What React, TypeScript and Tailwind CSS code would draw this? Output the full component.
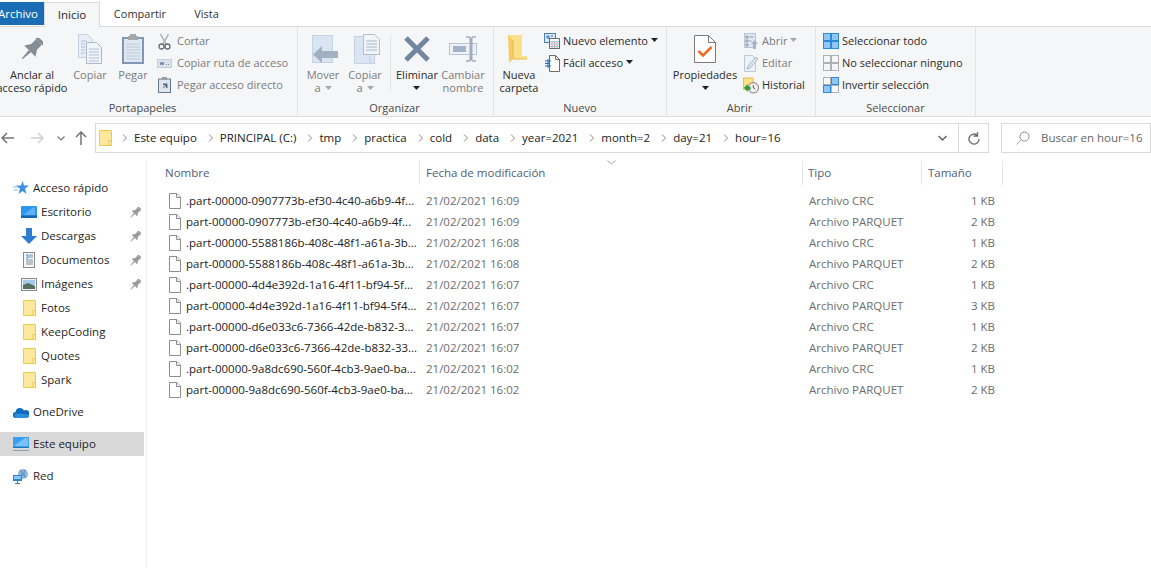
import type { ReactNode } from "react";

const FILES = [
  [".part-00000-0907773b-ef30-4c40-a6b9-4f...", "21/02/2021 16:09", "Archivo CRC", "1 KB"],
  ["part-00000-0907773b-ef30-4c40-a6b9-4f...", "21/02/2021 16:09", "Archivo PARQUET", "2 KB"],
  [".part-00000-5588186b-408c-48f1-a61a-3b...", "21/02/2021 16:08", "Archivo CRC", "1 KB"],
  ["part-00000-5588186b-408c-48f1-a61a-3b...", "21/02/2021 16:08", "Archivo PARQUET", "2 KB"],
  [".part-00000-4d4e392d-1a16-4f11-bf94-5f...", "21/02/2021 16:07", "Archivo CRC", "1 KB"],
  ["part-00000-4d4e392d-1a16-4f11-bf94-5f4...", "21/02/2021 16:07", "Archivo PARQUET", "3 KB"],
  [".part-00000-d6e033c6-7366-42de-b832-3...", "21/02/2021 16:07", "Archivo CRC", "1 KB"],
  ["part-00000-d6e033c6-7366-42de-b832-33...", "21/02/2021 16:07", "Archivo PARQUET", "2 KB"],
  [".part-00000-9a8dc690-560f-4cb3-9ae0-ba...", "21/02/2021 16:02", "Archivo CRC", "1 KB"],
  ["part-00000-9a8dc690-560f-4cb3-9ae0-ba...", "21/02/2021 16:02", "Archivo PARQUET", "2 KB"],
];

const CRUMBS = ["Este equipo", "PRINCIPAL (C:)", "tmp", "practica", "cold", "data", "year=2021", "month=2", "day=21", "hour=16"];

function Caret({ dim }: { dim?: boolean }) {
  return (
    <svg width="7" height="4" viewBox="0 0 7 4" className="inline-block">
      <path d="M0 0h7L3.500 4z" fill={dim ? "#a8a8a8" : "#222"} />
    </svg>
  );
}

function LargeButton({
  icon,
  lines,
  width,
  dim,
  caret,
}: {
  icon: ReactNode;
  lines: ReactNode[];
  width: string;
  dim?: boolean;
  caret?: boolean;
}) {
  return (
    <div className={`flex flex-col items-center ${width} ${dim ? "text-[#7c7c7c]" : "text-[#2b2b2b]"}`}>
      <div className="flex h-[41px] items-center justify-center pt-[3px]">{icon}</div>
      <div className="flex flex-col items-center whitespace-nowrap leading-[13px]">
        {lines.map((line, i) => (
          <span key={i} className="flex h-[13px] items-center gap-1">
            {line}
          </span>
        ))}
        {caret ? (
          <span className="flex h-[13px] items-center">
            <Caret />
          </span>
        ) : null}
      </div>
    </div>
  );
}

function SmallButton({
  icon,
  label,
  gap,
  dim,
  caret,
}: {
  icon: ReactNode;
  label: string;
  gap: string;
  dim?: boolean;
  caret?: boolean;
}) {
  return (
    <div className={`flex h-[22px] items-center whitespace-nowrap ${dim ? "text-[#7c7c7c]" : "text-[#2b2b2b]"}`}>
      <div className={`flex justify-center ${gap}`}>{icon}</div>
      <span>{label}</span>
      {caret ? (
        <span className="ml-[3px] flex items-center pb-[2px]">
          <Caret dim={dim} />
        </span>
      ) : null}
    </div>
  );
}

function Group({
  label,
  width,
  labelClass,
  children,
}: {
  label: string;
  width: string;
  labelClass?: string;
  children: ReactNode;
}) {
  return (
    <div className={`flex h-[90px] shrink-0 flex-col border-r border-[#e1e3e6] ${width}`}>
      <div className="flex h-[72px] flex-1 items-start">{children}</div>
      <div className={`pb-[2px] text-center leading-[14px] text-[#4a4a4a] ${labelClass ?? ""}`}>{label}</div>
    </div>
  );
}

function Column({ children, className }: { children: ReactNode; className: string }) {
  return <div className={`flex flex-col pt-[3px] ${className}`}>{children}</div>;
}

const PinIcon = ({ size = 22, color = "#858d95" }: { size?: number; color?: string }) => (
  <svg width={size} height={size} viewBox="0 0 22 22">
    <g transform="rotate(45 11 11)" fill={color}>
      <rect x="5" y="-2" width="12" height="3" />
      <rect x="7" y="1" width="8" height="8" />
      <path d="M7 8h8l4 6H3z" />
      <path d="M9.500 14h3l-1 11h-1z" />
    </g>
  </svg>
);

const CopyIcon = () => (
  <svg width="24" height="30" viewBox="0 0 24 30">
    <path d="M.5.500h9l5 5v18H.5z" fill="#e8eef6" stroke="#c5d1df" />
    <path d="M8.500 8.500h10l5 5v16h-15z" fill="#f1f4f8" stroke="#a9b8ca" />
    <path d="M3 7h6M3 10h4M3 13h4M3 16h4M3 19h4M11 15h10M11 18h10M11 21h10M11 24h10M11 27h10" stroke="#b3c0d1" />
  </svg>
);

const PasteIcon = () => (
  <svg width="22" height="30" viewBox="0 0 22 30">
    <rect x="1" y="4" width="20" height="25" fill="#dfe7f1" stroke="#8096b2" strokeWidth="2" />
    <path d="M8 0h6v2h2v4H6V2h2z" fill="#a3a6aa" />
    <path d="M4 10h14M4 13h14M4 16h14M4 19h14M4 22h14M4 25h14" stroke="#bfcbdb" />
  </svg>
);

const ScissorsIcon = () => (
  <svg width="13" height="17" viewBox="0 0 13 17" fill="none">
    <path d="M2.500 1l5.500 10M10.500 1L5 11" stroke="#a8adb3" strokeWidth="1.500" />
    <circle cx="3.500" cy="13.500" r="2.500" stroke="#5f6b78" strokeWidth="1.300" />
    <circle cx="9.500" cy="13.500" r="2.500" stroke="#5f6b78" strokeWidth="1.300" />
  </svg>
);

const PathIcon = () => (
  <svg width="15" height="9" viewBox="0 0 15 9" fill="none">
    <rect x=".5" y=".5" width="14" height="8" fill="#dbe3ee" stroke="#c2cedd" />
    <path d="M3 3l1 3 1-3 1 3 1-3M9 5.500h1M11 5.500h1" stroke="#66758a" strokeWidth=".8" />
  </svg>
);

const PasteShortcutIcon = () => (
  <svg width="13" height="16" viewBox="0 0 13 16">
    <rect x=".5" y="2" width="12" height="13.500" fill="#dfe5ec" stroke="#64788f" />
    <rect x="4" y="0" width="5" height="3" fill="#9a9ea3" />
    <path d="M4 12l3-4H5V6.500h4.500V11H8V9z" fill="#586b82" />
  </svg>
);

const MoveIcon = () => (
  <svg width="26" height="28" viewBox="0 0 26 28" className="ml-1">
    <rect x=".5" y=".5" width="20" height="27" fill="#d9e5f3" stroke="#c3d2e4" />
    <path d="M10 11v17l-9-8.500z" fill="#a3b0c1" />
    <rect x="9" y="16" width="17" height="7" fill="#a3b0c1" />
  </svg>
);

const CopyToIcon = () => (
  <svg width="26" height="30" viewBox="0 0 26 30" className="ml-1">
    <rect x=".5" y="2.500" width="20" height="27" fill="#d9e5f3" stroke="#c3d2e4" />
    <path d="M16 3v26" stroke="#c3d2e4" />
    <path d="M9.500.500h11l5 5v15h-16z" fill="#f1f4f8" stroke="#b3bfce" />
    <path d="M12 7h11M12 10h11M12 13h11M12 16h11" stroke="#a9b6c6" />
  </svg>
);

const DeleteIcon = () => (
  <svg width="26" height="26" viewBox="0 0 26 26">
    <path d="M2 2l22 22M24 2L2 24" stroke="#7386a0" strokeWidth="5" />
  </svg>
);

const RenameIcon = () => (
  <svg width="28" height="26" viewBox="0 0 28 26" fill="none">
    <rect x=".5" y="7.500" width="27" height="11" fill="#eef2f7" stroke="#b7c4d5" />
    <rect x="4" y="10" width="13" height="6" fill="#a2b3c9" />
    <path d="M17 1h3l2 1.500L24 1h3M17 25h3l2-1.500 2 1.500h3" stroke="#a0adbd" strokeWidth="1.500" />
    <path d="M22 2v22" stroke="#a0adbd" strokeWidth="3" />
  </svg>
);

const NewFolderIcon = () => (
  <svg width="19" height="28" viewBox="0 0 19 28" className="mr-[3px]">
    <path d="M0 0h14v21h5v3H5z" fill="#fbe08a" />
    <path d="M0 0l5 5v19l-4 4z" fill="#f5cd62" />
    <path d="M5 5v19h14" fill="none" stroke="#e4b850" />
  </svg>
);

const NewItemIcon = () => (
  <svg width="16" height="16" viewBox="0 0 16 16" fill="none">
    <rect x=".5" y=".5" width="11" height="9" fill="#d6e8f8" stroke="#4f7ea8" />
    <path d="M3 3h2v2H3zM7 3h2" stroke="#2f78b9" />
    <rect x="5.500" y="5.500" width="10" height="10" fill="#fff" stroke="#6d6d6d" />
    <path d="M8 8v7M10.500 8v7M13 8v7" stroke="#e59a8f" />
    <path d="M6 8.500h9M6 11h9M6 13.500h9" stroke="#a9c6e3" />
  </svg>
);

const EasyAccessIcon = () => (
  <svg width="15" height="17" viewBox="0 0 15 17" fill="none">
    <path d="M4.500.500h6l4 4v12h-10z" fill="#fff" stroke="#6d6d6d" />
    <path d="M10.500.500v4h4" stroke="#6d6d6d" />
    <path d="M0 6h6M0 8.500h5M0 11h6M3 4v9" stroke="#1b6fb5" />
  </svg>
);

const PropertiesIcon = () => (
  <svg width="22" height="28" viewBox="0 0 22 28" fill="none">
    <path d="M.5.500h14l7 7v20H.5z" fill="#fdfdfd" stroke="#7a7a7a" />
    <path d="M14.500.500v7h7" stroke="#7a7a7a" />
    <path d="M4.500 16l4.500 4.500 8.500-8.500" stroke="#ec6a24" strokeWidth="2.500" />
  </svg>
);

const OpenIcon = () => (
  <svg width="14" height="16" viewBox="0 0 14 16" fill="none">
    <rect x=".5" y=".5" width="11" height="14" fill="#dfe7f1" stroke="#b9c6d6" />
    <path d="M2 3h2v2H2zM2 7h2v2H2zM2 11h2v2H2zM5.500 4h4M5.500 8h2" stroke="#8d9cae" />
    <path d="M10.500 7l3.500 4h-2v5H9v-5H7z" fill="#a4b3c5" />
  </svg>
);

const EditIcon = () => (
  <svg width="14" height="17" viewBox="0 0 14 17" fill="none">
    <path d="M.5.500h8l3 3v13H.5z" fill="#edf2f8" stroke="#bac8da" />
    <path d="M3 14l1-3 8-9 2 2-8 9z" fill="#dfe7f1" stroke="#a8b7ca" />
  </svg>
);

const HistoryIcon = () => (
  <svg width="17" height="17" viewBox="0 0 17 17" fill="none">
    <rect x=".5" y=".5" width="10" height="12" fill="#fbe08a" stroke="#e3bb4b" />
    <circle cx="11" cy="11" r="5.500" fill="#f2f2f2" stroke="#6f6f6f" />
    <path d="M11 8v3l2 1" stroke="#555" />
    <path d="M1 11l4-4v2.500h3V13H5v2.500z" fill="#2f9a35" />
  </svg>
);

const SelectIcon = ({ mode }: { mode: "all" | "none" | "invert" }) => {
  const cells = [
    [0.5, 0.5],
    [8.5, 0.5],
    [0.5, 8.5],
    [8.5, 8.5],
  ];
  return (
    <svg width="16" height="16" viewBox="0 0 16 16">
      {cells.map(([x, y], i) => {
        const active = mode === "all" || (mode === "invert" && (i === 1 || i === 2));
        return (
          <rect
            key={i}
            x={x}
            y={y}
            width="7"
            height="7"
            fill={active ? "#90c6f2" : "#f5f6f7"}
            stroke={active ? "#2c8ad8" : "#b0b0b0"}
          />
        );
      })}
    </svg>
  );
};

const FolderIcon = () => (
  <svg width="13" height="16" viewBox="0 0 13 16">
    <rect x=".5" y=".5" width="12" height="15" rx=".5" fill="#fde89d" stroke="#efc94f" />
    <rect x="10" y="10.500" width="2.500" height="5" fill="#fde89d" stroke="#efc94f" />
  </svg>
);

const FileIcon = () => (
  <svg width="12" height="16" viewBox="0 0 12 16" className="shrink-0">
    <path d="M.5.500h7.500l3.500 3.500v11.500H.5z" fill="#fff" stroke="#8e8e8e" />
    <path d="M7.500.500v4h4" fill="#f0f0f0" stroke="#8e8e8e" />
  </svg>
);

const StarIcon = () => (
  <svg width="16" height="14" viewBox="0 0 16 14">
    <path d="M9.500 0l1.500 4.500h5L12 7.500 13.500 13 9.500 10l-4 3 1.500-5.500-4-3h5z" fill="#3a8ee6" />
    <path d="M0 6h5M1 9h4" stroke="#7fbdf2" />
  </svg>
);

const DesktopIcon = () => (
  <svg width="16" height="12" viewBox="0 0 16 12">
    <rect x="0" y="0" width="16" height="11" rx="1" fill="#2a96ee" />
    <path d="M2 9L12 1.500h2V9z" fill="#5cb2f5" />
    <rect y="9.500" width="16" height="2.500" fill="#1566b7" />
  </svg>
);

const DownloadIcon = () => (
  <svg width="16" height="16" viewBox="0 0 16 16">
    <path d="M5 0h6v8h5l-8 8-8-8h5z" fill="#2d7ed0" />
  </svg>
);

const DocumentsIcon = () => (
  <svg width="13" height="16" viewBox="0 0 13 16" fill="none">
    <rect x=".5" y=".5" width="11" height="15" fill="#f7f7f7" stroke="#8b8b8b" />
    <path d="M3 3h2v3H3" stroke="#2f8ad8" />
    <path d="M6 3h4M6 5h4M3 8h7M3 10h7M3 12h7" stroke="#7f8d9c" />
  </svg>
);

const PicturesIcon = () => (
  <svg width="16" height="13" viewBox="0 0 16 13">
    <rect x=".5" y=".5" width="15" height="12" fill="#f0f0f0" stroke="#8b8b8b" />
    <rect x="2" y="2" width="12" height="5" fill="#a6c9ea" />
    <path d="M2 7l5-2 7 3v3H2z" fill="#55705f" />
  </svg>
);

const CloudIcon = () => (
  <svg width="16" height="11" viewBox="0 0 16 11">
    <path d="M3 11a3 3 0 0 1-.5-6A4.500 4.500 0 0 1 11 3.500 3.500 3.500 0 0 1 16 8a3 3 0 0 1-3 3z" fill="#0f6cbd" />
    <path d="M3 11a2.500 2.500 0 0 1 0-4.500L11 7l5 1a3 3 0 0 1-3 3z" fill="#2b8fe0" />
  </svg>
);

const ComputerIcon = () => (
  <svg width="16" height="15" viewBox="0 0 16 15">
    <rect x="0" y="0" width="16" height="10" fill="#3aa0ee" />
    <path d="M2 8l10-7h3v8H2z" fill="#79c1f6" />
    <rect x="0" y="10" width="16" height="1" fill="#2a6fb0" />
    <rect x="0" y="13" width="16" height="1" fill="#8da1b6" />
  </svg>
);

const NetworkIcon = () => (
  <svg width="16" height="15" viewBox="0 0 16 15">
    <circle cx="10" cy="5" r="5" fill="#8fb9dd" />
    <path d="M7 1c3 2 3 6 0 9M12 1c-2 3-1 6 1 8" stroke="#4a7fae" fill="none" />
    <rect x="0" y="6" width="9" height="6" fill="#2a86cd" />
    <rect x="1" y="7" width="7" height="3" fill="#8cc8f5" />
    <path d="M4.500 12v2M2 14.500h5" stroke="#4c7ea8" />
  </svg>
);

function NavItem({
  icon,
  label,
  pinned,
  indent,
  selected,
}: {
  icon: ReactNode;
  label: string;
  pinned?: boolean;
  indent?: boolean;
  selected?: boolean;
}) {
  return (
    <div className={`flex h-6 items-center text-[#1f1f1f] ${selected ? "bg-[#d9d9d9]" : ""}`}>
      <div className={`flex shrink-0 justify-center ${indent ? "ml-[25px] w-[24px]" : "ml-[17px] w-[24px]"}`}>{icon}</div>
      <span>{label}</span>
      {pinned ? (
        <span className="ml-auto mr-[3px] flex">
          <PinIcon size={11} color="#9a9a9a" />
        </span>
      ) : null}
    </div>
  );
}

function Chevron() {
  return (
    <svg width="5" height="8" viewBox="0 0 5 8" fill="none">
      <path d="M1 .5L4.500 4 1 7.500" stroke="#8a8a8a" />
    </svg>
  );
}

export default function App() {
  return (
    <div
      className="-ml-2 h-[568px] w-[1159px] overflow-hidden bg-white text-[11.500px] text-[#1f1f1f]"
      style={{ fontFamily: '"Open Sans", sans-serif' }}
    >
      <div className="flex h-[26px] items-end pt-[2px]">
        <div className="flex h-[23px] w-[52px] items-center justify-center self-start bg-[#1a6db5] text-white">Archivo</div>
        <div className="relative z-10 -mb-px flex h-[25px] w-[56px] items-center justify-center border border-b-0 border-[#dadbdc] bg-[#f5f6f7]">
          Inicio
        </div>
        <div className="flex h-6 w-[80px] items-center justify-center text-[11px] text-[#333]">Compartir</div>
        <div className="ml-[4px] flex h-6 w-[45px] items-center justify-center text-[11px] text-[#333]">Vista</div>
      </div>

      <div className="flex h-[91px] border-y border-[#dadbdc] bg-[#f5f6f7] text-[11px]">
        <Group label="Portapapeles" width="w-[306px]" labelClass="pr-[4px]">
          <LargeButton width="w-[80px]" icon={<PinIcon />} lines={["Anclar al", "acceso rápido"]} />
          <LargeButton width="w-[36px]" dim icon={<CopyIcon />} lines={["Copiar"]} />
          <LargeButton width="w-[50px]" dim icon={<PasteIcon />} lines={["Pegar"]} />
          <Column className="-ml-[1px]">
            <SmallButton dim gap="mr-[5px] w-[15px]" icon={<ScissorsIcon />} label="Cortar" />
            <SmallButton dim gap="mr-[5px] w-[15px]" icon={<PathIcon />} label="Copiar ruta de acceso" />
            <SmallButton dim gap="mr-[5px] w-[15px]" icon={<PasteShortcutIcon />} label="Pegar acceso directo" />
          </Column>
        </Group>

        <Group label="Organizar" width="w-[196px]" labelClass="pr-[2px]">
          <LargeButton width="w-[50px]" dim icon={<MoveIcon />} lines={["Mover", <>a <Caret dim /></>]} />
          <LargeButton width="w-[34px]" dim icon={<CopyToIcon />} lines={["Copiar", <>a <Caret dim /></>]} />
          <div className="ml-[8px] mt-[9px] h-[55px] w-px bg-[#e1e3e6]" />
          <LargeButton width="w-[52px]" icon={<DeleteIcon />} lines={["Eliminar"]} caret />
          <LargeButton width="w-[40px]" dim icon={<RenameIcon />} lines={["Cambiar", "nombre"]} />
        </Group>

        <Group label="Nuevo" width="w-[173px]">
          <LargeButton width="w-[50px]" icon={<NewFolderIcon />} lines={["Nueva", "carpeta"]} />
          <Column className="">
            <SmallButton gap="mr-[3px] w-[16px]" icon={<NewItemIcon />} label="Nuevo elemento" caret />
            <SmallButton gap="mr-[3px] w-[16px]" icon={<EasyAccessIcon />} label="Fácil acceso" caret />
          </Column>
        </Group>

        <Group label="Abrir" width="w-[149px]" labelClass="pr-[3px]">
          <LargeButton width="w-[76px]" icon={<PropertiesIcon />} lines={["Propiedades"]} caret />
          <Column className="">
            <SmallButton dim gap="mr-[3px] w-[16px]" icon={<OpenIcon />} label="Abrir" caret />
            <SmallButton dim gap="mr-[3px] w-[16px]" icon={<EditIcon />} label="Editar" />
            <SmallButton gap="mr-[3px] w-[16px]" icon={<HistoryIcon />} label="Historial" />
          </Column>
        </Group>

        <Group label="Seleccionar" width="w-[160px]">
          <Column className="pl-[7px]">
            <SmallButton gap="mr-[3px] w-[16px]" icon={<SelectIcon mode="all" />} label="Seleccionar todo" />
            <SmallButton gap="mr-[3px] w-[16px]" icon={<SelectIcon mode="none" />} label="No seleccionar ninguno" />
            <SmallButton gap="mr-[3px] w-[16px]" icon={<SelectIcon mode="invert" />} label="Invertir selección" />
          </Column>
        </Group>
      </div>

      <div className="box-content flex h-[30px] items-center pt-[6px]">
        <div className="flex w-[103px] items-center pl-[8px]">
          <svg width="13" height="12" viewBox="0 0 13 12" fill="none" className="ml-px">
            <path d="M6 1L1 6l5 5M1 6h12" stroke="#757575" strokeWidth="1.500" />
          </svg>
          <svg width="13" height="12" viewBox="0 0 13 12" fill="none" className="ml-[17px]">
            <path d="M7 1l5 5-5 5M12 6H0" stroke="#d0d0d0" strokeWidth="1.500" />
          </svg>
          <svg width="8" height="5" viewBox="0 0 8 5" fill="none" className="ml-[13px]">
            <path d="M.5.500L4 4 7.500.5" stroke="#7c7c7c" strokeWidth="1.200" />
          </svg>
          <svg width="12" height="14" viewBox="0 0 12 14" fill="none" className="ml-[10px]">
            <path d="M1 6l5-5 5 5M6 1v13" stroke="#757575" strokeWidth="1.500" />
          </svg>
        </div>
        <div className="flex h-[30px] w-[894px] items-center border border-[#d9d9d9] pl-[3px]">
          <FolderIcon />
          <div className="ml-[10px] flex items-center">
            {CRUMBS.map((crumb) => (
              <span key={crumb} className="flex items-center">
                <Chevron />
                <span className="ml-[7px] mr-[7px] whitespace-nowrap pr-[4px] text-[#222]">{crumb}</span>
              </span>
            ))}
          </div>
          <div className="ml-auto flex h-full items-center">
            <svg width="9" height="6" viewBox="0 0 9 6" fill="none" className="mr-[11px]">
              <path d="M.5 1L4.500 5 8.500 1" stroke="#666" strokeWidth="1.500" />
            </svg>
            <div className="flex h-full w-[30px] items-center justify-center border-l border-[#d9d9d9]">
              <svg width="12" height="13" viewBox="0 0 12 13" fill="none">
                <path d="M9.500 3.500A5 5 0 1 0 11 7M9.500 0v4h-4" stroke="#6d6d6d" strokeWidth="1.400" />
              </svg>
            </div>
          </div>
        </div>
        <div className="ml-3 flex h-[30px] flex-1 items-center border border-[#d9d9d9] pl-[14px] text-[#666]">
          <svg width="14" height="14" viewBox="0 0 14 14" fill="none" className="mr-[11px]">
            <circle cx="8.500" cy="5.500" r="4.500" stroke="#8a8a8a" />
            <path d="M5 9l-4.500 4.500" stroke="#a8a8a8" />
          </svg>
          Buscar en hour=16
        </div>
      </div>

      <div className="flex">
        <div className="mt-[8px] h-[410px] w-[155px] shrink-0 border-r border-[#f0f0f0] pt-[15px]">
          <div className="mr-[2px]">
            <NavItem icon={<StarIcon />} label="Acceso rápido" />
            <NavItem indent pinned icon={<DesktopIcon />} label="Escritorio" />
            <NavItem indent pinned icon={<DownloadIcon />} label="Descargas" />
            <NavItem indent pinned icon={<DocumentsIcon />} label="Documentos" />
            <NavItem indent pinned icon={<PicturesIcon />} label="Imágenes" />
            <NavItem indent icon={<FolderIcon />} label="Fotos" />
            <NavItem indent icon={<FolderIcon />} label="KeepCoding" />
            <NavItem indent icon={<FolderIcon />} label="Quotes" />
            <NavItem indent icon={<FolderIcon />} label="Spark" />
            <div className="h-2" />
            <NavItem icon={<CloudIcon />} label="OneDrive" />
            <div className="h-2" />
            <NavItem selected icon={<ComputerIcon />} label="Este equipo" />
            <div className="h-2" />
            <NavItem icon={<NetworkIcon />} label="Red" />
          </div>
        </div>

        <div className="relative mt-[8px] flex-1">
          <div className="flex h-6 text-[#4c607a]">
            <div className="w-[273px] border-r border-[#e5e5e5] pl-[18px] pt-[3px]">Nombre</div>
            <div className="w-[383px] border-r border-[#e5e5e5] pl-[6px] pt-[3px]">Fecha de modificación</div>
            <div className="w-[119px] border-r border-[#e5e5e5] pl-[5px] pt-[3px]">Tipo</div>
            <div className="w-[81px] border-r border-[#e5e5e5] pl-[6px] pt-[3px]">Tamaño</div>
          </div>
          <svg width="9" height="5" viewBox="0 0 9 5" fill="none" className="absolute left-[460px] -top-[1px]">
            <path d="M.5.500L4.500 4 8.500.5" stroke="#a0a0a0" />
          </svg>
          <div className="pt-[5px]">
            {FILES.map(([name, date, type, size]) => (
              <div key={name} className="flex h-[21px] items-center">
                <div className="flex w-[273px] items-center pl-[22px]">
                  <FileIcon />
                  <span className="ml-[5px] whitespace-nowrap text-[#222]">{name}</span>
                </div>
                <div className="w-[383px] pl-[6px] text-[#6d6d6d]">{date}</div>
                <div className="w-[119px] pl-[6px] text-[#6d6d6d]">{type}</div>
                <div className="w-[73px] text-right text-[#6d6d6d]">{size}</div>
              </div>
            ))}
          </div>
        </div>
      </div>
    </div>
  );
}
